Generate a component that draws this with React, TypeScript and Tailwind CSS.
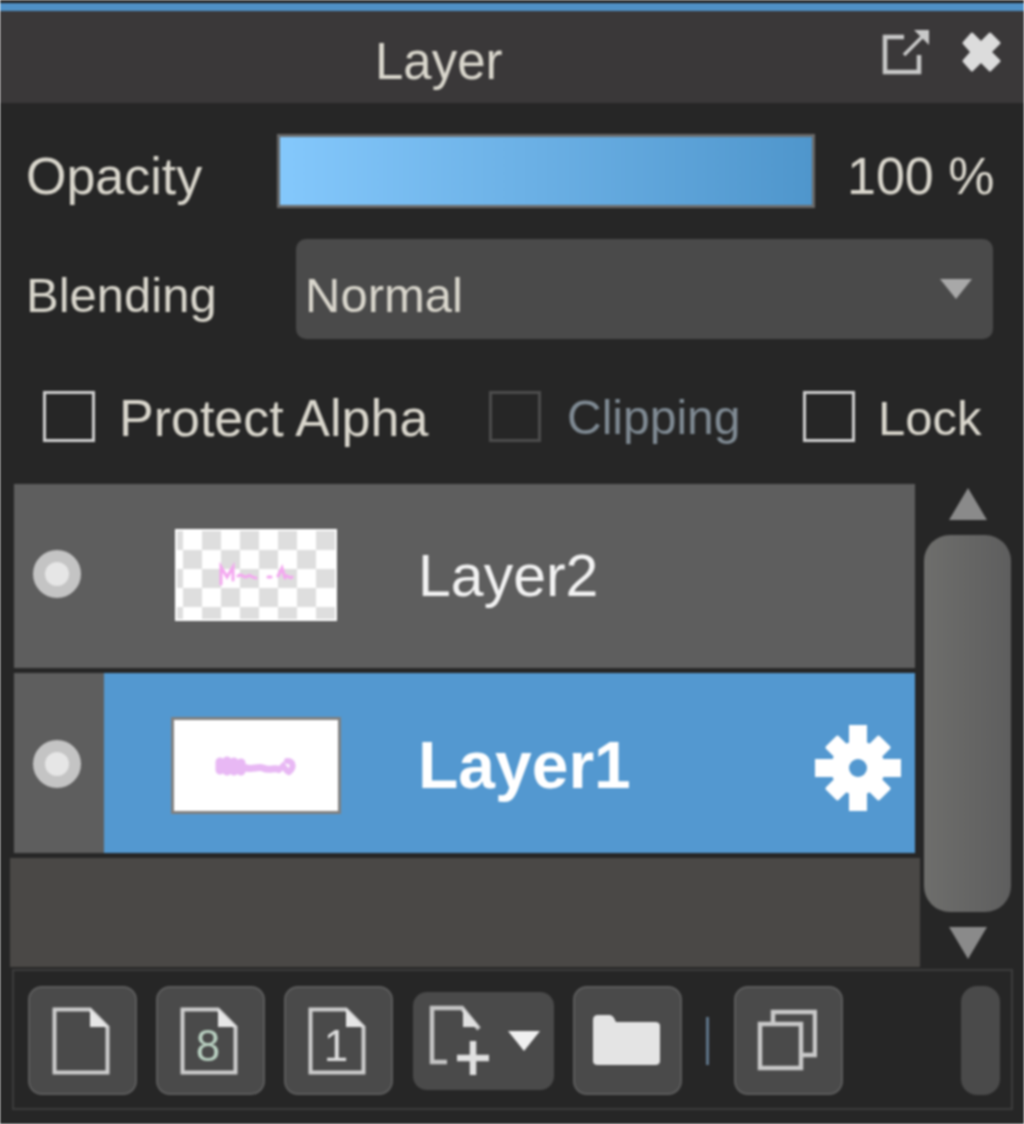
import React from "react";

const Page = ({ children }: { children?: React.ReactNode }) => (
  <svg className="-ml-[4px]" width="58" height="68" viewBox="0 0 58 68" fill="none">
    <path d="M2.5 2.5H38L55.5 20V65.5H2.5Z" stroke="#cccccc" strokeWidth="4" />
    <path d="M38 2V20H56Z" fill="#e6e6e6" />
    {children}
  </svg>
);

const Btn = ({ className, children }: { className: string; children: React.ReactNode }) => (
  <div className={`h-[109px] w-[109px] shrink-0 rounded-[14px] border-2 border-[#5c5c5c] bg-[#4a4a4a] flex items-center justify-center ${className}`}>
    {children}
  </div>
);

const Check = ({ dim }: { dim?: boolean }) => (
  <div className={`h-[51px] w-[52px] shrink-0 border-[3px] ${dim ? "border-[#4c4c4c]" : "border-[#cfcfcf]"} bg-[#262626]`} />
);

const Dot = () => (
  <div className="h-[48px] w-[48px] rounded-full bg-[#c4c4c4] flex items-center justify-center">
    <div className="h-[24px] w-[24px] rounded-full bg-[#e6e6e6]" />
  </div>
);

const Gear = () => (
  <svg width="88" height="88" viewBox="0 0 88 88">
    <g fill="#fff">
      <rect x="35" y="1" width="18" height="86" />
      <rect x="1" y="35" width="86" height="18" />
      <rect x="35" y="6" width="18" height="76" rx="2" transform="rotate(45 44 44)" />
      <rect x="35" y="6" width="18" height="76" rx="2" transform="rotate(135 44 44)" />
    </g>
    <circle cx="44" cy="44" r="27" fill="#fff" />
    <circle cx="44" cy="44" r="9" fill="#5398d0" />
  </svg>
);

export default function App() {
  return (
    <div className="relative h-[1124px] w-[1024px] overflow-hidden bg-[#262626] text-[#d9d6cc] blur-[1px] [font-family:'Liberation_Sans',sans-serif]">
      <div className="h-[3px] bg-[#1c1c1c]" />
      <div className="h-[8px] bg-[#4f90c6]" />

      <div className="flex h-[92px] items-center bg-[#3a3839] pl-[375px] pr-[20px]">
        <span className="mt-[9px] text-[51px] leading-none">Layer</span>
        <div className="ml-auto -mt-[10px] flex items-center gap-[28px]">
          <svg width="48" height="48" viewBox="0 0 48 48" fill="none" stroke="#c8c8c8">
            <path d="M22 9H3V44H37V27" strokeWidth="4.5" />
            <path d="M22 27L44 5" strokeWidth="3.5" />
            <path d="M32 2H47V17Z" fill="#c8c8c8" stroke="none" />
          </svg>
          <svg width="46" height="46" viewBox="0 0 46 46">
            <path d="M6 14L14 5L23 14L32 5L41 14L32 23L41 32L32 41L23 32L14 41L6 32L14 23Z" fill="#dcdcdc" stroke="#dcdcdc" strokeWidth="3" strokeLinejoin="round" />
          </svg>
        </div>
      </div>

      <div className="mt-[31px] flex h-[74px] items-center pl-[26px]">
        <span className="mt-[9px] w-[251px] text-[52px] leading-none">Opacity</span>
        <div className="h-[74px] w-[538px] border-[3px] border-[#6a6a6a] bg-gradient-to-r from-[#84c8fc] to-[#4f96cc]" />
        <span className="ml-[32px] mt-[9px] whitespace-nowrap text-[52px] leading-none">100 %</span>
      </div>

      <div className="mt-[31px] flex h-[100px] items-center pl-[26px]">
        <span className="mt-[12px] w-[270px] text-[49px] leading-none">Blending</span>
        <div className="flex h-[100px] w-[697px] items-center rounded-[10px] bg-[#4a4a4a] pl-[9px] pr-[21px]">
          <span className="mt-[12px] text-[49px] leading-none">Normal</span>
          <svg className="ml-auto" width="32" height="20" viewBox="0 0 32 20"><path d="M0 0H32L16 20Z" fill="#a8a8a8" /></svg>
        </div>
      </div>

      <div className="mt-[52px] flex h-[50px] items-center pl-[43px] text-[52px] leading-none">
        <Check />
        <span className="ml-[24px] mt-[4px] w-[370px] whitespace-nowrap">Protect Alpha</span>
        <Check dim />
        <span className="ml-[26px] mt-[4px] w-[236px] whitespace-nowrap text-[48px] text-[#7f8a93]">Clipping</span>
        <Check />
        <span className="ml-[23px] mt-[4px] text-[49px]">Lock</span>
      </div>

      <div className="mt-[43px] flex h-[483px]">
        <div className="ml-[10px] flex w-[910px] flex-col">
          <div className="ml-[4px] mr-[5px] flex h-[184px] items-center bg-[#5e5e5e]">
            <div className="ml-[19px] -mt-[4px]"><Dot /></div>
            <div className="ml-[94px] -mt-[3px] h-[92px] w-[162px] border-2 border-white bg-[repeating-conic-gradient(#dedede_0_25%,#ffffff_0_50%)] bg-[length:38px_38px] bg-[position:6px_0px] flex items-center justify-center">
              <svg width="76" height="26" viewBox="0 0 76 26" fill="none" stroke="#f4a8f0" strokeWidth="3" strokeLinecap="round">
                <path d="M3 22V5L9 15L15 5V18M20 14C24 10 26 18 30 14C32 12 34 16 38 16M50 15H53M60 14L64 6L67 16M67 14C70 12 72 18 74 15" />
              </svg>
            </div>
            <span className="ml-[81px] text-[59px] leading-none text-[#f2f2f2]">Layer2</span>
          </div>
          <div className="ml-[4px] mr-[5px] mt-[5px] flex h-[180px] bg-[#5e5e5e]">
            <div className="flex w-[90px] shrink-0 items-center pl-[19px]"><div className="mt-[2px]"><Dot /></div></div>
            <div className="flex flex-1 items-center bg-[#5398d0]">
              <div className="ml-[67px] mt-[5px] flex h-[97px] w-[170px] items-center justify-center border-[3px] border-[#808080] bg-white">
                <svg width="86" height="26" viewBox="0 0 86 26" fill="none" stroke="#e8b8f4" strokeLinecap="round">
                  <path d="M7 9V17M14 8V18M21 9V18M28 10V18" strokeWidth="9" />
                  <path d="M30 14C38 18 44 13 50 15C56 18 60 15 64 16" strokeWidth="7" />
                  <path d="M66 17L70 13L74 18M74 8C80 8 82 14 76 19" strokeWidth="6" />
                </svg>
              </div>
              <span className="ml-[77px] mt-[3px] text-[66px] font-bold leading-none text-white">Layer1</span>
              <div className="ml-auto mr-[13px] mt-[10px]"><Gear /></div>
            </div>
          </div>
          <div className="mt-[5px] flex-1 bg-[#4a4846]" />
        </div>
        <div className="ml-[4px] flex w-[87px] flex-col items-center">
          <svg className="mt-[4px]" width="38" height="32" viewBox="0 0 38 32"><path d="M19 0L38 32H0Z" fill="#8a8a8a" /></svg>
          <div className="mt-[15px] h-[377px] w-[87px] shrink-0 rounded-[26px] bg-gradient-to-r from-[#6e6e6c] to-[#5e5e5e]" />
          <svg className="mt-[15px]" width="38" height="32" viewBox="0 0 38 32"><path d="M0 0H38L19 32Z" fill="#8a8a8a" /></svg>
        </div>
      </div>

      <div className="ml-[12px] mt-[2px] flex h-[141px] w-[1001px] items-center border-2 border-[#3c3c3c] pl-[14px] pt-[2px]">
        <Btn className=""><Page /></Btn>
        <Btn className="ml-[19px]">
          <Page><text x="28" y="54" textAnchor="middle" fontSize="44" fontFamily="Liberation Sans, sans-serif" fill="#b8cfc0">8</text></Page>
        </Btn>
        <Btn className="ml-[19px]">
          <Page><text x="28" y="54" textAnchor="middle" fontSize="44" fontFamily="Liberation Sans, sans-serif" fill="#dcdcdc">1</text></Page>
        </Btn>
        <div className="ml-[20px] flex h-[98px] w-[141px] shrink-0 items-center rounded-[14px] bg-[#4a4a4a] pl-[16px]">
          <svg width="62" height="72" viewBox="0 0 62 72" fill="none">
            <path d="M18 57H3V3H33L50 24" stroke="#c4c4c4" strokeWidth="4.5" />
            <path d="M34 3V22H50Z" fill="#e0e0e0" />
            <path d="M44 36V70M28 53H60" stroke="#e0e0e0" strokeWidth="6.5" />
          </svg>
          <svg className="ml-[17px]" width="32" height="20" viewBox="0 0 32 20"><path d="M0 0H32L16 20Z" fill="#f0f0f0" /></svg>
        </div>
        <Btn className="ml-[19px]">
          <svg className="-ml-[3px] -mt-[2px]" width="70" height="52" viewBox="0 0 70 52"><path d="M2 6Q2 1 7 1H18Q22 1 24 6L25 8H64Q69 8 69 12V47Q69 51 64 51H7Q2 51 2 47Z" fill="#e4e4e4" /></svg>
        </Btn>
        <div className="ml-[24px] h-[48px] w-[3px] shrink-0 bg-[#5e7488]" />
        <Btn className="ml-[25px]">
          <svg className="-ml-[3px] -mt-[2px]" width="60" height="62" viewBox="0 0 60 62" fill="none" stroke="#c8c8c8" strokeWidth="4.5">
            <path d="M16 14V3H58V46H44" />
            <rect x="3" y="15" width="41" height="44" />
          </svg>
        </Btn>
        <div className="ml-[118px] h-[109px] w-[39px] shrink-0 rounded-[16px] bg-[#4a4a4a]" />
      </div>
    </div>
  );
}
